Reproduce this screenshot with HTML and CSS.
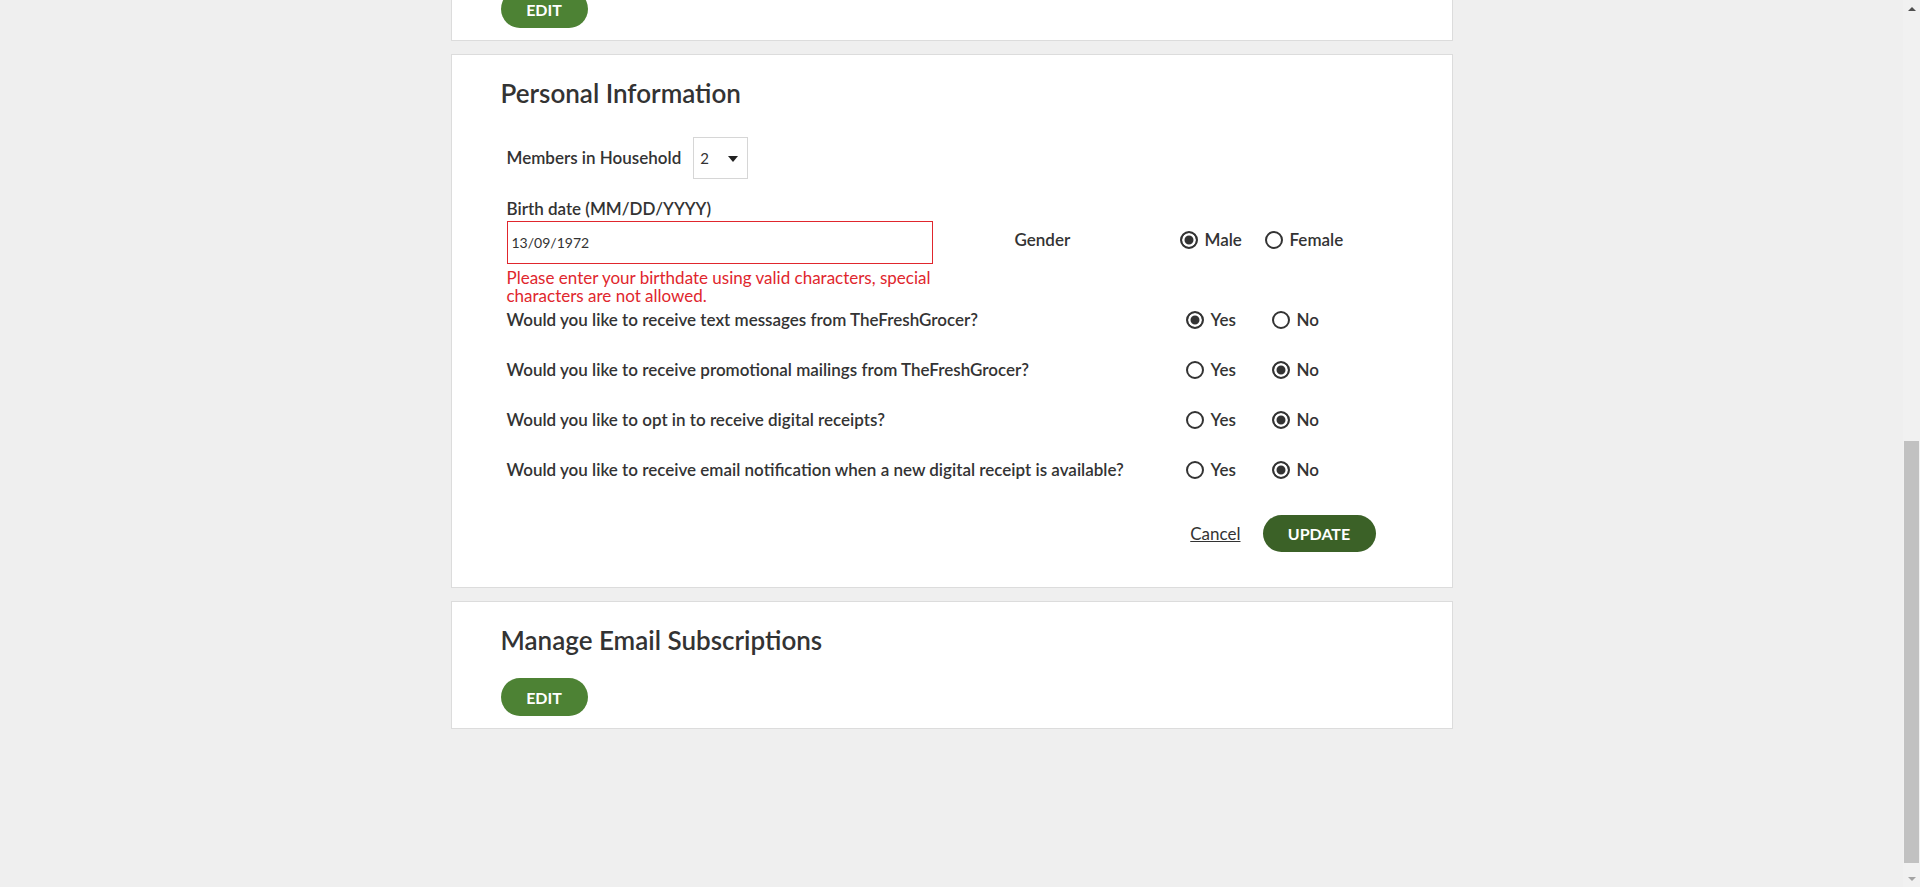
FILE: index.html
```html
<!DOCTYPE html>
<html lang="en">
<head>
<meta charset="utf-8">
<title>My Account - Personal Information</title>
<link rel="stylesheet" href="styles.css">
</head>
<body>
<main class="page">
  <section class="card card--cut">
    <button class="btn btn--edit" type="button">EDIT</button>
  </section>

  <section class="card card--form">
    <h2 class="card__title">Personal Information</h2>
    <form class="form">
      <div class="field-inline">
        <label class="label" for="members">Members in Household</label>
        <div class="select-wrap">
          <select id="members" class="select">
            <option>1</option>
            <option selected>2</option>
            <option>3</option>
            <option>4</option>
            <option>5</option>
          </select>
        </div>
      </div>

      <div class="birth-row">
        <label class="label birth-label" for="birth">Birth date (MM/DD/YYYY)</label>
        <input id="birth" class="text-input is-invalid" type="text" value="13/09/1972">
        <p class="error-text">Please enter your birthdate using valid characters, special characters are not allowed.</p>
        <span class="label gender-label">Gender</span>
        <div class="opts gender-opts">
          <label class="opt opt--wide"><input class="radio" type="radio" name="gender" checked><span>Male</span></label>
          <label class="opt"><input class="radio" type="radio" name="gender"><span>Female</span></label>
        </div>
      </div>

      <div class="q-row q-row--first">
        <span class="label">Would you like to receive text messages from TheFreshGrocer?</span>
        <div class="opts">
          <label class="opt"><input class="radio" type="radio" name="q1" checked><span>Yes</span></label>
          <label class="opt"><input class="radio" type="radio" name="q1"><span>No</span></label>
        </div>
      </div>
      <div class="q-row">
        <span class="label">Would you like to receive promotional mailings from TheFreshGrocer?</span>
        <div class="opts">
          <label class="opt"><input class="radio" type="radio" name="q2"><span>Yes</span></label>
          <label class="opt"><input class="radio" type="radio" name="q2" checked><span>No</span></label>
        </div>
      </div>
      <div class="q-row">
        <span class="label">Would you like to opt in to receive digital receipts?</span>
        <div class="opts">
          <label class="opt"><input class="radio" type="radio" name="q3"><span>Yes</span></label>
          <label class="opt"><input class="radio" type="radio" name="q3" checked><span>No</span></label>
        </div>
      </div>
      <div class="q-row">
        <span class="label">Would you like to receive email notification when a new digital receipt is available?</span>
        <div class="opts">
          <label class="opt"><input class="radio" type="radio" name="q4"><span>Yes</span></label>
          <label class="opt"><input class="radio" type="radio" name="q4" checked><span>No</span></label>
        </div>
      </div>

      <div class="actions">
        <a class="link-cancel" href="#">Cancel</a>
        <button class="btn btn--update" type="button">UPDATE</button>
      </div>
    </form>
  </section>

  <section class="card card--email">
    <h2 class="card__title">Manage Email Subscriptions</h2>
    <button class="btn btn--edit btn--spaced" type="button">EDIT</button>
  </section>
</main>

<div class="scrollbar" aria-hidden="true">
  <span class="scrollbar__arrow scrollbar__arrow--up"></span>
  <span class="scrollbar__track"><span class="scrollbar__thumb"></span></span>
  <span class="scrollbar__arrow scrollbar__arrow--down"></span>
</div>
</body>
</html>
```

FILE: styles.css
```css
body {
  margin: 0;
  padding-right: 17px;
  background: #efefef;
  color: #333333;
  font-family: "Lato", "Liberation Sans", sans-serif;
}

.page {
  width: 1002px;
  margin: 0 auto;
  padding-bottom: 40px;
}

.card {
  box-sizing: border-box;
  background: #ffffff;
  border: 1px solid #dcdcdc;
  padding: 23px 49px 12px;
  margin-bottom: 13px;
}

.card--cut {
  margin-top: -11px;
  padding-top: 0;
}

.card__title {
  margin: 0;
  font-size: 26px;
  line-height: 30px;
  font-weight: 600;
  color: #333333;
}

.btn {
  border: none;
  border-radius: 20px;
  color: #ffffff;
  font-family: inherit;
  font-weight: 700;
  font-size: 16px;
  cursor: pointer;
  padding: 0;
}

.btn--edit {
  display: block;
  width: 87px;
  height: 38px;
  background: #4d8234;
}

.btn--spaced {
  margin-top: 23px;
}

.btn--update {
  width: 113px;
  height: 37px;
  background: #3b6127;
}

.form {
  width: 869px;
  margin: 29px 0 23px 6px;
}

.label {
  font-size: 17px;
  font-weight: 600;
  line-height: 20px;
  color: #333333;
}

.field-inline {
  display: flex;
  align-items: center;
  gap: 12px;
}

.select-wrap {
  position: relative;
  width: 55px;
  height: 42px;
}

.select {
  appearance: none;
  -webkit-appearance: none;
  box-sizing: border-box;
  width: 55px;
  height: 42px;
  border: 1px solid #d6d6d6;
  border-radius: 0;
  background: #ffffff;
  padding: 0 0 0 6px;
  font-family: inherit;
  font-size: 15px;
  color: #333333;
}

.select-wrap::after {
  content: "";
  position: absolute;
  right: 10px;
  top: 19px;
  border-left: 5px solid transparent;
  border-right: 5px solid transparent;
  border-top: 6px solid #222222;
  pointer-events: none;
}

.birth-row {
  display: grid;
  grid-template-columns: 508px 165px 1fr;
  margin-top: 20px;
}

.birth-label {
  grid-column: 1;
  grid-row: 1;
  margin-bottom: 2px;
}

.text-input {
  grid-column: 1;
  grid-row: 2;
  box-sizing: border-box;
  width: 426px;
  height: 43px;
  border: 1px solid #d9d9d9;
  padding: 0 4px;
  font-family: inherit;
  font-size: 14px;
  color: #333333;
  outline: none;
}

.text-input.is-invalid {
  border-color: #e0262d;
}

.error-text {
  grid-column: 1;
  grid-row: 3;
  width: 440px;
  margin: 5px 0 0;
  font-size: 17px;
  line-height: 18px;
  color: #e0262d;
}

.gender-label {
  grid-column: 2;
  grid-row: 2;
  align-self: center;
  margin-bottom: 5px;
}

.gender-opts {
  grid-column: 3;
  grid-row: 2;
  align-self: center;
  margin-bottom: 5px;
}

.opts {
  display: flex;
  align-items: center;
}

.opt {
  display: flex;
  align-items: center;
  gap: 7px;
  width: 86px;
  font-size: 17px;
  font-weight: 600;
  line-height: 20px;
  color: #333333;
  cursor: pointer;
}

.opt--wide {
  width: 85px;
}

.radio {
  appearance: none;
  -webkit-appearance: none;
  box-sizing: border-box;
  width: 18px;
  height: 18px;
  margin: 0;
  border: 2px solid #333333;
  border-radius: 50%;
  background: #ffffff;
  flex: none;
}

.radio:checked {
  background: #333333;
  box-shadow: inset 0 0 0 2.5px #ffffff;
}

.q-row {
  display: grid;
  grid-template-columns: 679px auto;
  align-items: center;
  height: 24px;
  margin-top: 26px;
}

.q-row--first {
  margin-top: 3px;
}

.actions {
  display: flex;
  justify-content: flex-end;
  align-items: center;
  gap: 22px;
  margin-top: 33px;
}

.link-cancel {
  font-size: 17px;
  color: #333333;
  text-decoration: underline;
}

/* window scrollbar, drawn over the right edge of the page */
.scrollbar {
  position: fixed;
  top: 0;
  right: 0;
  bottom: 0;
  width: 17px;
  display: flex;
  flex-direction: column;
  background: #f1f1f1;
}

.scrollbar__arrow {
  flex: none;
  height: 17px;
  display: flex;
  align-items: center;
  justify-content: center;
}

.scrollbar__arrow::before {
  content: "";
  border-left: 4.5px solid transparent;
  border-right: 4.5px solid transparent;
}

.scrollbar__arrow--up::before {
  border-bottom: 4px solid #505050;
}

.scrollbar__arrow--down::before {
  border-top: 4px solid #a3a3a3;
}

.scrollbar__track {
  flex: 1;
  display: flex;
  flex-direction: column;
  justify-content: flex-end;
  padding: 0 1px 7px;
}

.scrollbar__thumb {
  height: 422px;
  background: #c1c1c1;
}
```
